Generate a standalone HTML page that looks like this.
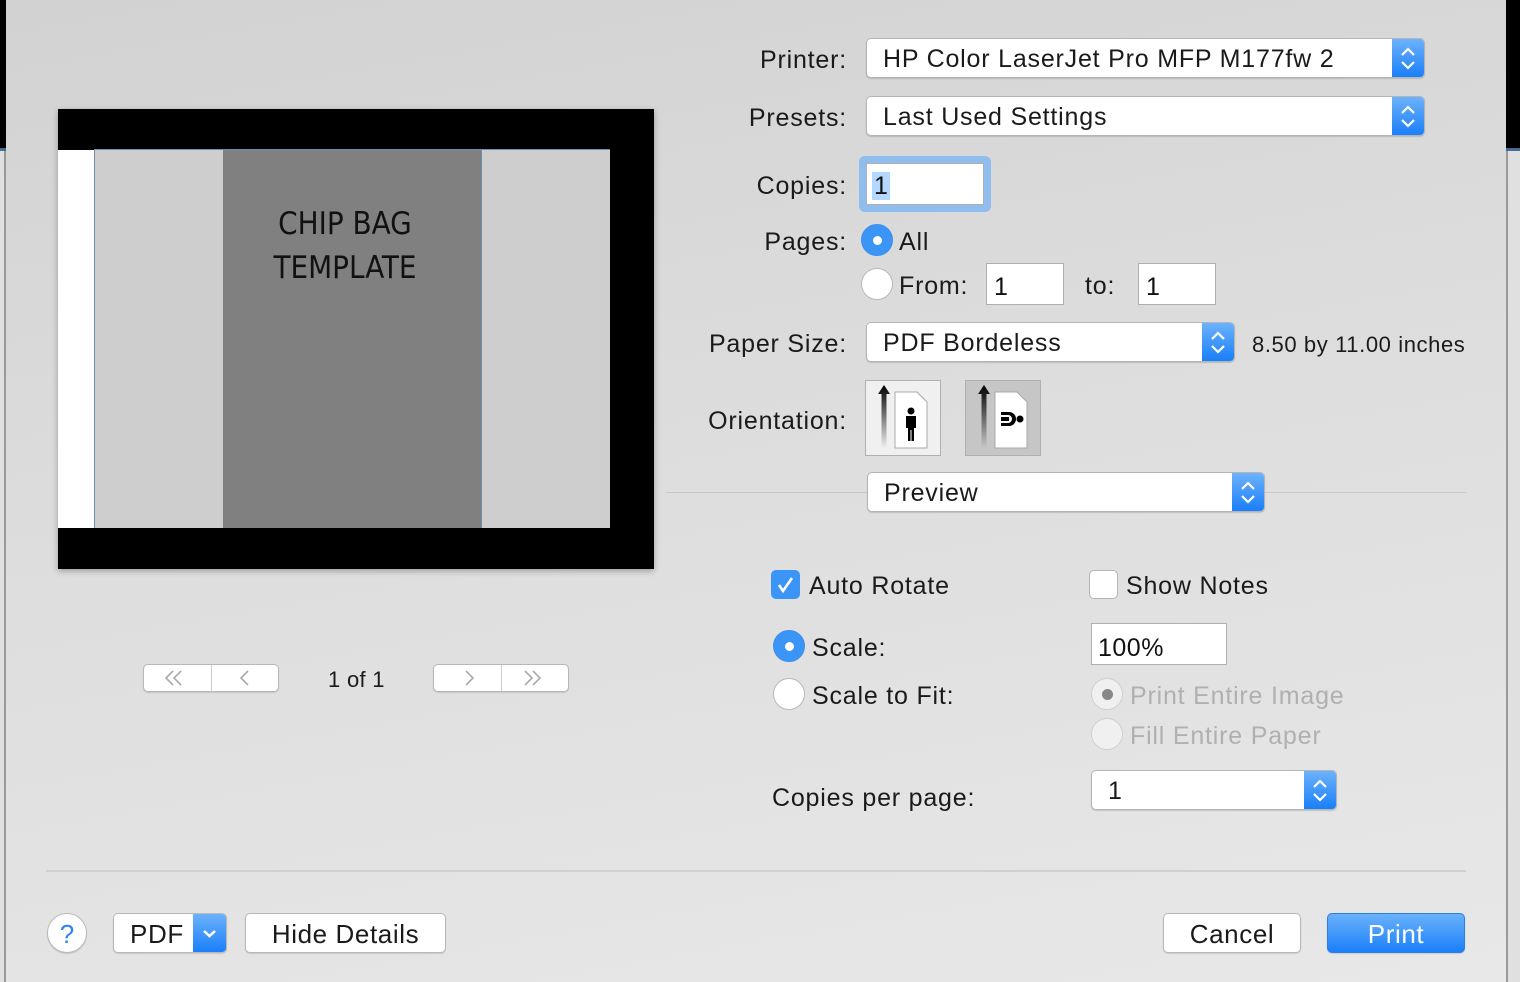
<!DOCTYPE html>
<html><head><meta charset="utf-8"><style>
*{box-sizing:border-box;margin:0;padding:0}
body{width:1520px;height:982px;overflow:hidden;position:relative;font-family:"Liberation Sans",sans-serif;background:#e0e0e0}
.dlg{position:absolute;left:6px;top:0;width:1500px;height:982px;background:linear-gradient(170deg,#d2d2d2 0%,#dddddd 45%,#e8e8e8 100%)}
.a{position:absolute}
.t{position:absolute;font-size:25px;letter-spacing:0.8px;color:#1a1a1a;white-space:nowrap;line-height:30px}
.lbl{position:absolute;right:673px;font-size:25px;letter-spacing:0.8px;color:#1a1a1a;line-height:30px;white-space:nowrap}
.pop{position:absolute;background:#fff;border:1px solid #b5b5b5;border-radius:5px;box-shadow:0 1px 1px rgba(0,0,0,.15);font-size:25px;letter-spacing:0.8px;line-height:40px;padding-left:16px;color:#1a1a1a;overflow:hidden}
.pop .b{position:absolute;right:0;top:0;bottom:0;width:32px;background:linear-gradient(#6cb2fb,#1a7ff9)}
.fld{position:absolute;background:#fff;border:1px solid #b0b0b0;font-size:25px;letter-spacing:0.5px;line-height:38px;padding-left:7px;color:#111}
.rad{position:absolute;width:32px;height:32px;border-radius:50%;background:#fff;border:1px solid #b8b8b8}
.rad.on{background:#3b95f7;border-color:#3b8ef0}
.rad.on::after{content:"";position:absolute;left:11px;top:11px;width:9px;height:9px;border-radius:50%;background:#fff}
.btn{position:absolute;background:#fff;border:1px solid #b8b8b8;border-radius:5px;box-shadow:0 1px 1px rgba(0,0,0,.12);font-size:26px;letter-spacing:0.6px;line-height:38px;text-align:center;color:#1a1a1a}
</style></head><body>
<div class="a" style="left:0;top:0;width:6px;height:148px;background:#000"></div>
<div class="a" style="left:1506px;top:0;width:14px;height:148px;background:#000"></div>
<div class="a" style="left:1506px;top:148px;width:14px;height:3px;background:#4a6c94"></div>
<div class="a" style="left:0;top:148px;width:6px;height:3px;background:#4a6c94"></div>
<div class="dlg"></div>
<div class="a" style="left:1506px;top:151px;width:2px;height:831px;background:#999"></div>
<div class="a" style="left:4px;top:151px;width:2px;height:831px;background:#999"></div>

<!-- preview -->
<div class="a" style="left:58px;top:109px;width:596px;height:460px;background:#000;box-shadow:0 2px 6px rgba(0,0,0,.3)">
 <div class="a" style="left:0;top:41px;width:36px;height:378px;background:#fff"></div>
 <div class="a" style="left:36px;top:40px;width:129px;height:379px;background:#cfcece;border-left:1px solid #6d8fb0;border-top:1px solid #6d8fb0"></div>
 <div class="a" style="left:165px;top:40px;width:258px;height:379px;background:#808080;border-top:1px solid #6d8fb0"></div>
 <div class="a" style="left:423px;top:40px;width:129px;height:379px;background:#cfcece;border-left:1px solid #6d8fb0;border-top:1px solid #6d8fb0"></div>
 <div class="a" style="left:165px;top:93px;width:244px;text-align:center;font-size:31px;line-height:44px;color:#111;font-family:'DejaVu Sans Condensed','Liberation Sans',sans-serif">CHIP BAG<br>TEMPLATE</div>
</div>

<!-- nav -->
<div class="btn" style="left:143px;top:664px;width:136px;height:28px;border-radius:5px"></div>
<div class="a" style="left:211px;top:665px;width:1px;height:26px;background:#ccc"></div>
<svg class="a" style="left:143px;top:664px" width="136" height="28"><path d="M30 7l-7 7 7 7M38 7l-7 7 7 7M105 7l-7 7 7 7" stroke="#aaa" stroke-width="1.6" fill="none"/></svg>
<div class="t" style="left:328px;top:665px;font-size:22px;letter-spacing:0.3px">1 of 1</div>
<div class="btn" style="left:433px;top:664px;width:136px;height:28px"></div>
<div class="a" style="left:501px;top:665px;width:1px;height:26px;background:#ccc"></div>
<svg class="a" style="left:433px;top:664px" width="136" height="28"><path d="M33 7l7 7-7 7M92 7l7 7-7 7M100 7l7 7-7 7" stroke="#aaa" stroke-width="1.6" fill="none"/></svg>

<!-- right -->
<div class="lbl" style="top:45px">Printer:</div>
<div class="pop" style="left:866px;top:38px;width:559px;height:40px">HP Color LaserJet Pro MFP M177fw 2<div class="b"><svg width="32" height="38"><path d="M10 16l6-6 6 6M10 23l6 6 6-6" stroke="#fff" stroke-width="2.2" fill="none"/></svg></div></div>
<div class="lbl" style="top:103px">Presets:</div>
<div class="pop" style="left:866px;top:96px;width:559px;height:40px">Last Used Settings<div class="b"><svg width="32" height="38"><path d="M10 16l6-6 6 6M10 23l6 6 6-6" stroke="#fff" stroke-width="2.2" fill="none"/></svg></div></div>
<div class="lbl" style="top:171px">Copies:</div>
<div class="a" style="left:859px;top:156px;width:132px;height:56px;border-radius:6px;background:#8fbdee"></div>
<div class="fld" style="left:866px;top:163px;width:118px;height:42px;line-height:44px;padding-left:5px"><span style="background:#b3d7ff;padding:0 2px">1</span></div>
<div class="lbl" style="top:227px">Pages:</div>
<div class="rad on" style="left:861px;top:224px"></div>
<div class="t" style="left:899px;top:227px">All</div>
<div class="rad" style="left:861px;top:268px"></div>
<div class="t" style="left:899px;top:271px">From:</div>
<div class="fld" style="left:986px;top:263px;width:78px;height:42px;line-height:46px">1</div>
<div class="t" style="left:1085px;top:271px">to:</div>
<div class="fld" style="left:1138px;top:263px;width:78px;height:42px;line-height:46px">1</div>
<div class="lbl" style="top:329px">Paper Size:</div>
<div class="pop" style="left:866px;top:322px;width:369px;height:40px">PDF Bordeless<div class="b"><svg width="32" height="38"><path d="M10 16l6-6 6 6M10 23l6 6 6-6" stroke="#fff" stroke-width="2.2" fill="none"/></svg></div></div>
<div class="t" style="left:1252px;top:330px;font-size:22px;letter-spacing:0.6px">8.50 by 11.00 inches</div>
<div class="lbl" style="top:406px">Orientation:</div>
<div class="a" style="left:865px;top:380px;width:76px;height:76px;background:#f0f0f0;border:1px solid #b0b0b0"></div>
<div class="a" style="left:965px;top:380px;width:76px;height:76px;background:#c6c6c6;border:1px solid #b0b0b0"></div>
<svg class="a" style="left:865px;top:380px" width="180" height="76">
<defs><linearGradient id="g" x1="0" y1="0" x2="0" y2="1"><stop offset="0" stop-color="#000"/><stop offset="1" stop-color="#000" stop-opacity="0"/></linearGradient></defs>
<path d="M13 14l6-9 6 9h-3.5v54h-5V14z" fill="url(#g)"/>
<path d="M30 12h22l10 10v46H30z" fill="#fff" stroke="#aaa"/>
<circle cx="46" cy="31" r="3.5"/><path d="M41 36h10v12h-2v13h-2.5V50h-1v11H43V48h-2z"/>
<path d="M113 14l6-9 6 9h-3.5v54h-5V14z" fill="url(#g)"/>
<path d="M130 12h22l10 10v46h-32z" fill="#fff" stroke="#aaa"/>
<path d="M136 32h8a7 7 0 010 14h-8v-3h7a4 4 0 000-8h-7z"/><rect x="136" y="37" width="8" height="4"/><circle cx="155" cy="39" r="3.5"/>
</svg>
<div class="a" style="left:666px;top:492px;width:800px;height:1px;background:#c8c8c8"></div>
<div class="pop" style="left:867px;top:472px;width:398px;height:40px">Preview<div class="b"><svg width="32" height="38"><path d="M10 16l6-6 6 6M10 23l6 6 6-6" stroke="#fff" stroke-width="2.2" fill="none"/></svg></div></div>

<div class="a" style="left:771px;top:570px;width:29px;height:29px;border-radius:5px;background:#3b95f7"><svg width="29" height="29"><path d="M8 15l4 6 9-13" stroke="#fff" stroke-width="2.5" fill="none"/></svg></div>
<div class="t" style="left:809px;top:571px">Auto Rotate</div>
<div class="a" style="left:1089px;top:570px;width:29px;height:29px;border-radius:5px;background:#fff;border:1px solid #b5b5b5"></div>
<div class="t" style="left:1126px;top:571px">Show Notes</div>
<div class="rad on" style="left:773px;top:630px"></div>
<div class="t" style="left:812px;top:633px">Scale:</div>
<div class="fld" style="left:1091px;top:623px;width:136px;height:42px;line-height:48px;padding-left:6px">100%</div>
<div class="rad" style="left:773px;top:678px"></div>
<div class="t" style="left:812px;top:681px">Scale to Fit:</div>
<div class="rad" style="left:1091px;top:678px;background:#f0f0f0;border-color:#d0d0d0"></div>
<div class="a" style="left:1102px;top:689px;width:11px;height:11px;border-radius:50%;background:#888"></div>
<div class="t" style="left:1130px;top:681px;color:#b0b0b0">Print Entire Image</div>
<div class="rad" style="left:1091px;top:718px;background:#f0f0f0;border-color:#d0d0d0"></div>
<div class="t" style="left:1130px;top:721px;color:#b0b0b0">Fill Entire Paper</div>
<div class="t" style="left:772px;top:783px">Copies per page:</div>
<div class="pop" style="left:1091px;top:770px;width:246px;height:40px">1<div class="b"><svg width="32" height="38"><path d="M10 16l6-6 6 6M10 23l6 6 6-6" stroke="#fff" stroke-width="2.2" fill="none"/></svg></div></div>

<div class="a" style="left:46px;top:870px;width:1420px;height:2px;background:#d0d0d0"></div>
<div class="a" style="left:47px;top:913px;width:40px;height:40px;border-radius:50%;background:#fff;border:1px solid #bbb;box-shadow:0 1px 1px rgba(0,0,0,.15);color:#2a84f5;font-size:26px;text-align:center;line-height:40px">?</div>
<div class="btn" style="left:113px;top:913px;width:114px;height:40px;text-align:left;padding-left:16px;overflow:hidden;line-height:40px">PDF<div class="a" style="right:0;top:0;bottom:0;width:33px;background:linear-gradient(#6cb2fb,#1a7ff9)"><svg width="33" height="38"><path d="M11 17l5.5 5 5.5-5" stroke="#fff" stroke-width="2.5" fill="none"/></svg></div></div>
<div class="btn" style="left:245px;top:913px;width:201px;height:40px;line-height:40px">Hide Details</div>
<div class="btn" style="left:1163px;top:913px;width:138px;height:40px;line-height:40px">Cancel</div>
<div class="btn" style="left:1327px;top:913px;width:138px;height:40px;line-height:40px;background:linear-gradient(#6ab1fb,#1a80fa);border-color:#2a7ee8;color:#fff">Print</div>
</body></html>
